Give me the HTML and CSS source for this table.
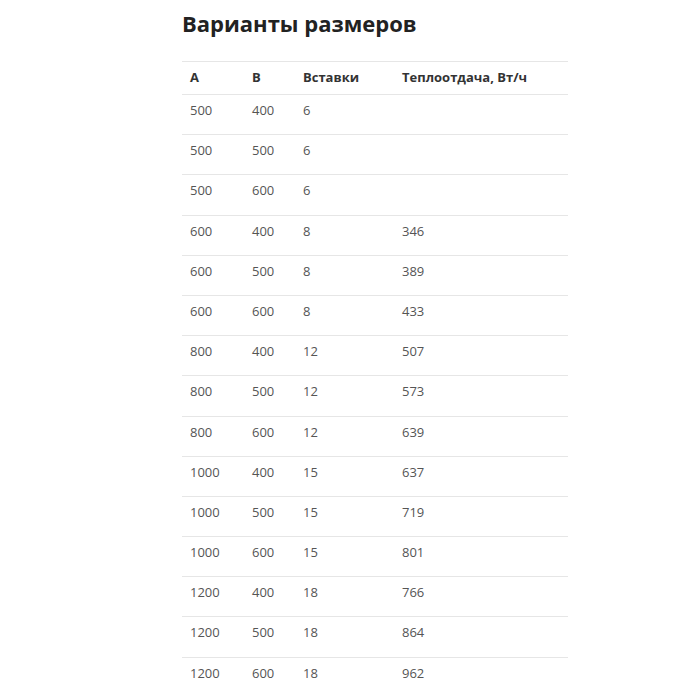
FILE: index.html
```html
<!DOCTYPE html>
<html lang="ru">
<head>
<meta charset="utf-8">
<link rel="stylesheet" href="styles.css">
</head>
<body>
<div class="page">
  <h2 class="title">Варианты размеров</h2>
  <table class="sizes">
    <thead>
      <tr><th class="c1">A</th><th class="c2">B</th><th class="c3">Вставки</th><th class="c4">Теплоотдача, Вт/ч</th></tr>
    </thead>
    <tbody>
      <tr><td>500</td><td>400</td><td>6</td><td></td></tr>
      <tr><td>500</td><td>500</td><td>6</td><td></td></tr>
      <tr><td>500</td><td>600</td><td>6</td><td></td></tr>
      <tr><td>600</td><td>400</td><td>8</td><td>346</td></tr>
      <tr><td>600</td><td>500</td><td>8</td><td>389</td></tr>
      <tr><td>600</td><td>600</td><td>8</td><td>433</td></tr>
      <tr><td>800</td><td>400</td><td>12</td><td>507</td></tr>
      <tr><td>800</td><td>500</td><td>12</td><td>573</td></tr>
      <tr><td>800</td><td>600</td><td>12</td><td>639</td></tr>
      <tr><td>1000</td><td>400</td><td>15</td><td>637</td></tr>
      <tr><td>1000</td><td>500</td><td>15</td><td>719</td></tr>
      <tr><td>1000</td><td>600</td><td>15</td><td>801</td></tr>
      <tr><td>1200</td><td>400</td><td>18</td><td>766</td></tr>
      <tr><td>1200</td><td>500</td><td>18</td><td>864</td></tr>
      <tr><td>1200</td><td>600</td><td>18</td><td>962</td></tr>
    </tbody>
  </table>
</div>
</body>
</html>
```
FILE: styles.css
```css
html, body {
  margin: 0;
  padding: 0;
  background: #ffffff;
}
body {
  font-family: "Open Sans", "Liberation Sans", sans-serif;
  color: #555555;
}
.page {
  width: 386px;
  margin-left: 182px;
  padding-top: 8px;
}
.title {
  margin: 0 0 23px 0;
  font-size: 22px;
  font-weight: 700;
  color: #222222;
  line-height: 30px;
}
.sizes {
  width: 386px;
  border-collapse: collapse;
  font-size: 13px;
}
.sizes th, .sizes td {
  text-align: left;
  border-top: 1px solid #e6e6e6;
  padding: 3px 0 12.2px 8px;
  line-height: 24px;
  vertical-align: top;
}
.sizes th {
  font-weight: 700;
  color: #333333;
  padding: 3px 0 5px 8px;
}
.c1 { width: 54px; }
.c2 { width: 43px; }
.c3 { width: 91px; }
```
